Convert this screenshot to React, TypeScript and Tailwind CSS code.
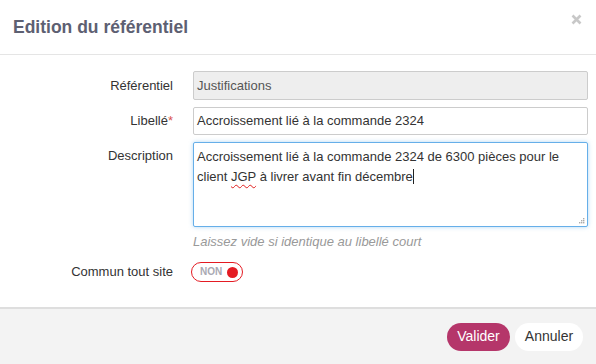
export default function App() {
  const font = { fontFamily: '"Liberation Sans", Arial, sans-serif' };
  return (
    <div className="w-[596px] h-[364px] bg-white flex flex-col text-[13px] text-[#333]" style={font}>
      <div className="h-[55px] shrink-0 border-b border-[#e5e5e5] flex items-center justify-between pl-[13px] pr-[14px]">
        <h1 className="text-[17.5px] font-bold text-[#5d6072] leading-none pt-[2px]">Edition du référentiel</h1>
        <svg width="11" height="11" viewBox="0 0 11 11" className="mb-[16px]">
          <path d="M1.5 1.5 L9.5 9.5 M9.5 1.5 L1.5 9.5" stroke="#c8c8c8" strokeWidth="2.6" />
        </svg>
      </div>
      <div className="flex-1 pt-[16px] pr-[8px] grid grid-cols-[173px_1fr] gap-x-5 content-start">
        <div className="h-[29px] flex items-center justify-end">Référentiel</div>
        <div className="h-[29px] border border-[#cccccc] bg-[#eeeeee] rounded-[2px] flex items-center px-[3px] text-[#555]">Justifications</div>

        <div className="h-[28px] mt-[7px] flex items-center justify-end">
          Libellé<span className="text-[#d9534f]">*</span>
        </div>
        <div className="h-[28px] mt-[7px] border border-[#cccccc] bg-white rounded-[2px] flex items-center px-[3px] text-[#333]">
          Accroissement lié à la commande 2324
        </div>

        <div className="h-[28px] mt-[7px] flex items-center justify-end">Description</div>
        <div className="relative h-[85px] mt-[7px] border border-[#66afe9] rounded-[2px] bg-white px-[3px] pt-[4px] leading-[20px] text-[#333] shadow-[0_0_4px_rgba(102,175,233,0.5)]">
          Accroissement lié à la commande 2324 de 6300 pièces pour le client{" "}
          <span className="underline decoration-wavy decoration-[#e02020] decoration-[1px] underline-offset-[3px]">JGP</span>{" "}
          à livrer avant fin décembre
          <span className="inline-block w-px h-[15px] bg-[#222] align-[-3px]"></span>
          <svg width="7" height="7" viewBox="0 0 7 7" className="absolute right-[2px] bottom-[2px]">
            <rect x="5" y="1" width="1.4" height="1.4" fill="#aaa" />
            <rect x="3" y="3" width="1.4" height="1.4" fill="#aaa" />
            <rect x="5" y="3" width="1.4" height="1.4" fill="#aaa" />
            <rect x="1" y="5" width="1.4" height="1.4" fill="#aaa" />
            <rect x="3" y="5" width="1.4" height="1.4" fill="#aaa" />
            <rect x="5" y="5" width="1.4" height="1.4" fill="#aaa" />
          </svg>
        </div>

        <div></div>
        <div className="mt-[6px] italic text-[#999] leading-[18px]">Laissez vide si identique au libellé court</div>

        <div className="h-[20px] mt-[11px] flex items-center justify-end">Commun tout site</div>
        <div className="h-[20px] mt-[11px] -ml-[2px] flex items-center">
          <div className="w-[52px] h-[20px] rounded-full border border-[#e41b23] flex items-center justify-between pl-[8px] pr-[4px]">
            <span className="text-[10px] font-bold text-[#a9a9b3] leading-none">NON</span>
            <span className="w-[11px] h-[11px] rounded-full bg-[#e41b23]"></span>
          </div>
        </div>
      </div>
      <div className="h-[57px] shrink-0 border-t-2 border-[#dedede] bg-[#f3f3f3] flex items-center justify-end gap-[5px] pr-[13px]">
        <button className="h-[28px] w-[63px] rounded-full bg-[#b5366a] text-white text-[14px]">Valider</button>
        <button className="h-[28px] w-[68px] rounded-full bg-white text-[#333] text-[14px]">Annuler</button>
      </div>
    </div>
  );
}
